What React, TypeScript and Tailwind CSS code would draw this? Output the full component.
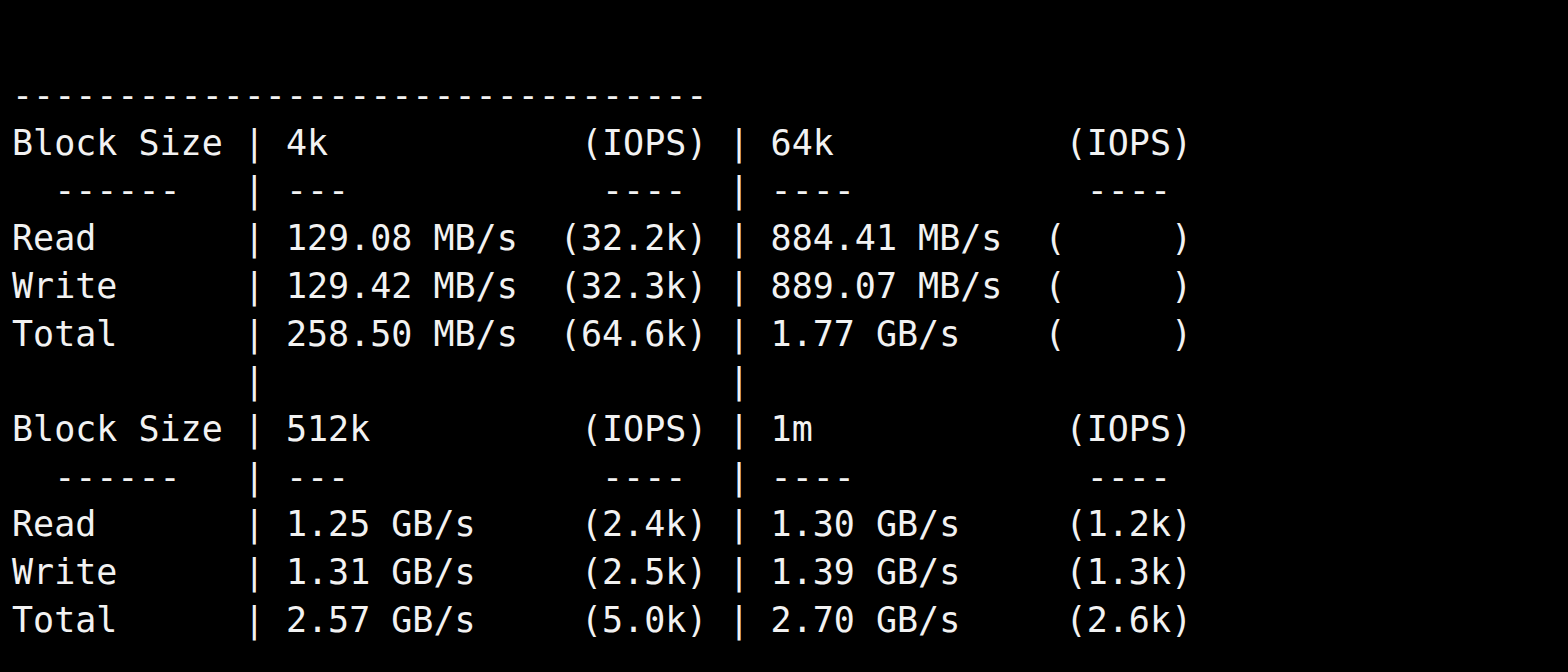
const row = (label: string, a: string, aI: string, b: string, bI: string) =>
  label.padEnd(11) + "| " + a.padEnd(20 - aI.length) + aI + " | " + b.padEnd(20 - bI.length) + bI;

const lines: string[] = [
  "---------------------------------",
  row("Block Size", "4k", "(IOPS)", "64k", "(IOPS)"),
  row("  ------", "---", " ---- ", "----", " ---- "),
  row("Read", "129.08 MB/s", "(32.2k)", "884.41 MB/s", "(     )"),
  row("Write", "129.42 MB/s", "(32.3k)", "889.07 MB/s", "(     )"),
  row("Total", "258.50 MB/s", "(64.6k)", "1.77 GB/s", "(     )"),
  "           |                      |",
  row("Block Size", "512k", "(IOPS)", "1m", "(IOPS)"),
  row("  ------", "---", " ---- ", "----", " ---- "),
  row("Read", "1.25 GB/s", "(2.4k)", "1.30 GB/s", "(1.2k)"),
  row("Write", "1.31 GB/s", "(2.5k)", "1.39 GB/s", "(1.3k)"),
  row("Total", "2.57 GB/s", "(5.0k)", "2.70 GB/s", "(2.6k)"),
];

export default function App() {
  return (
    <div className="w-[1568px] h-[672px] overflow-hidden bg-black pt-[72px] pl-[12px]">
      <div className="font-['DejaVu_Sans_Mono',monospace] text-[35px] leading-[47.7px] text-[#f2f2f2] whitespace-pre">
        {lines.map((l, i) => (
          <div key={i}>{l}</div>
        ))}
      </div>
    </div>
  );
}
